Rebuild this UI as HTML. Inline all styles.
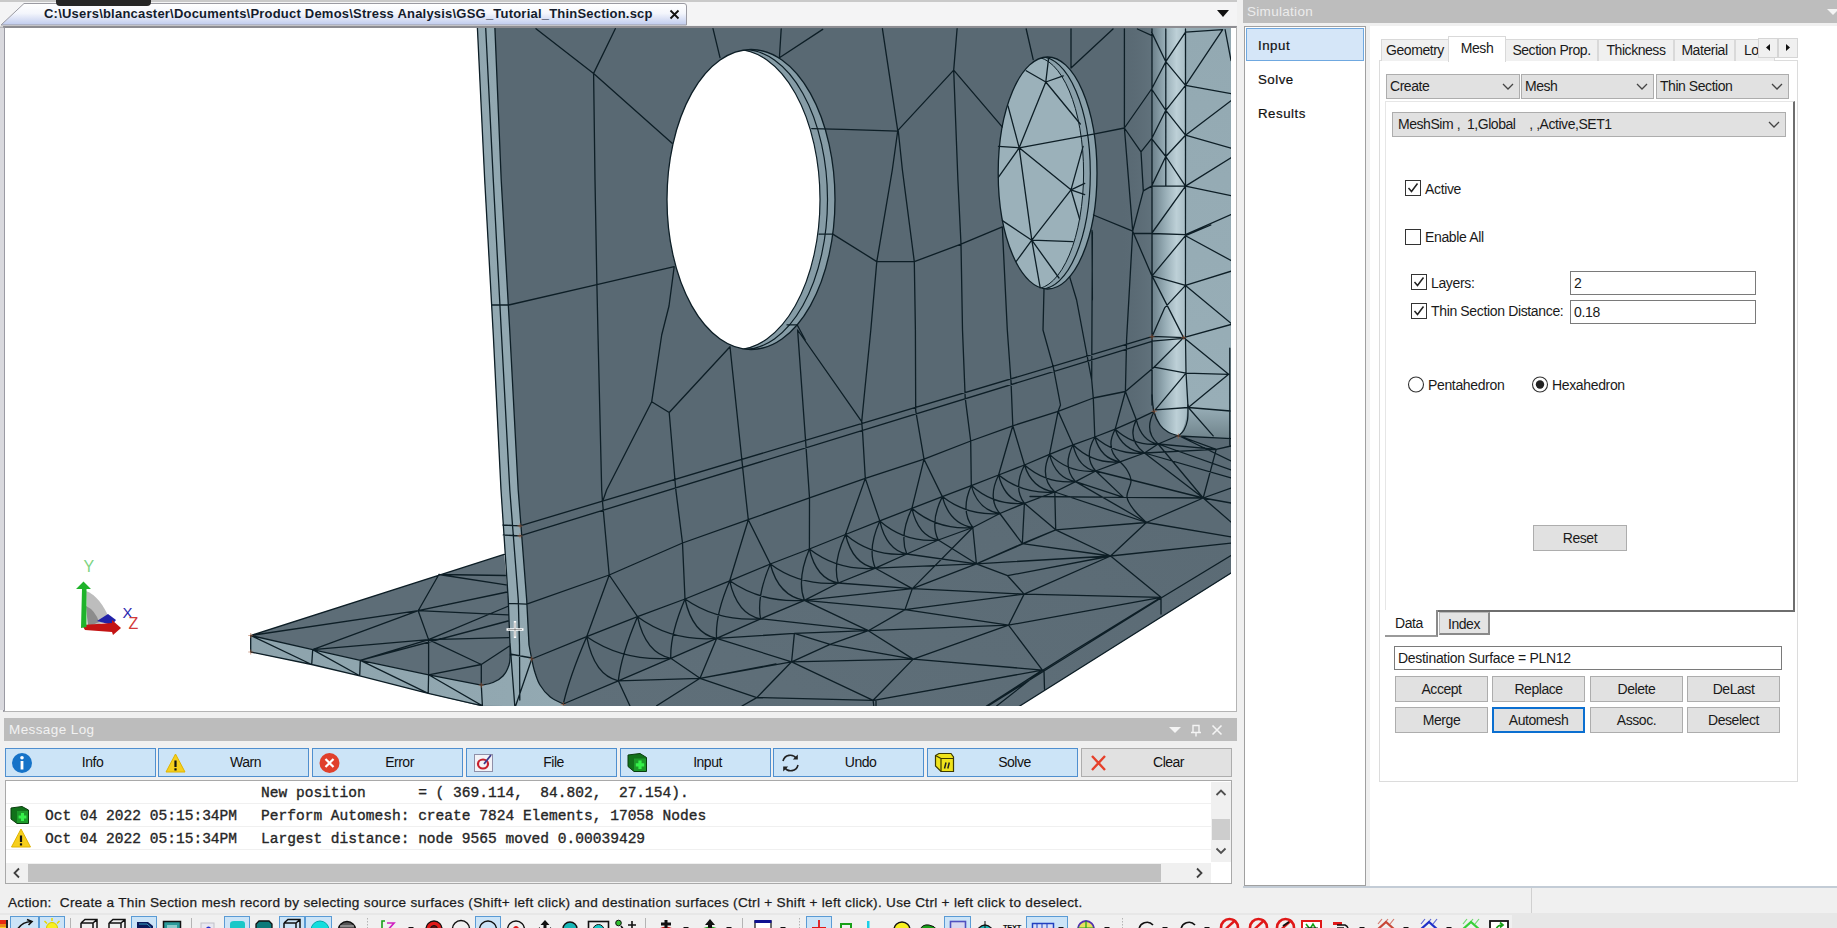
<!DOCTYPE html>
<html lang="en">
<head>
<meta charset="utf-8">
<title>Simulation - Thin Section Mesh</title>
<style>
*{box-sizing:border-box;margin:0;padding:0}
html,body{width:1837px;height:928px;overflow:hidden;background:#f0f0f0;font-family:"Liberation Sans",sans-serif;font-size:13.5px;color:#1a1a1a}
.abs{position:absolute}
#root{position:relative;width:1837px;height:928px;overflow:hidden;background:#f0f0f0}
/* ---------- document tab bar ---------- */
#tabbar{left:0;top:0;width:1237px;height:28px;background:#f4f4f5;border-top:2px solid #c9c9c9}
#tabbar .line{left:0;top:23px;width:1237px;height:3px;background:linear-gradient(#fdfdfd,#a8a8ac)}
#doctab{left:0;top:0;width:690px;height:26px}
#doctitle{left:44px;top:5.5px;font-size:13px;font-weight:bold;color:#141c2c;white-space:nowrap;letter-spacing:.21px;transform-origin:0 0}
#blob{left:56px;top:-4px;width:95px;height:10px;background:#262626;border-radius:4px}
/* ---------- viewport ---------- */
#vpframe{left:0;top:26px;width:1237px;height:686px;background:#fff;border-left:2px solid #9a9aa3;border-top:2px solid #8d8d92;border-right:1px solid #b4b4b4;border-bottom:1px solid #b4b4b4}
#vpleft{left:0;top:28px;width:4px;height:682px;background:#d9d9de}
#vp{left:5px;top:28px;width:1226px;height:678px;background:#fff;overflow:hidden}
/* ---------- message log ---------- */
#mlhead{left:4px;top:718px;width:1233px;height:23px;background:#bcbcbc;color:#f2f2f2;font-size:13.5px;line-height:23px;padding-left:5px;letter-spacing:.4px}
.mbtn{top:748px;height:29px;width:151px;background:#cce4f7;border:1px solid #4f8fcf;text-align:center;padding-left:24px;line-height:27px;font-size:14px;letter-spacing:-.5px;color:#111}
.mbtn svg{position:absolute;left:5px;top:3px}
#loglist{left:5px;top:780px;width:1227px;height:104px;background:#fff;border:1px solid #a9a9a9}
.lrow{left:0;width:1205px;height:23px;border-bottom:1px solid #f0f0f0;font-family:"Liberation Mono",monospace;font-size:14.55px;color:#262626;-webkit-text-stroke:.35px #262626;line-height:25px;white-space:pre}
#vscroll{left:1205px;top:1px;width:20px;height:80px;background:#f0f0f0}
#hscroll{left:0px;top:82px;width:1205px;height:20px;background:#f0f0f0}
/* ---------- status ---------- */
#status{left:0;top:888px;width:1837px;height:25px;background:#f0f0f0}
#statustxt{left:8px;top:7px;font-size:13.6px;letter-spacing:.3px;color:#1c1c1c;-webkit-text-stroke:.25px #1c1c1c;white-space:pre;transform-origin:0 0}
#tbstrip{left:0;top:913px;width:1837px;height:15px;background:#e7e7e7;overflow:hidden}
/* ---------- simulation panel ---------- */
#simhead{left:1243px;top:0;width:594px;height:23px;background:#bdbdbd;color:#ececec;font-size:13.5px;line-height:23px;padding-left:4px;letter-spacing:.3px}
#simlist{left:1244px;top:26px;width:122px;height:860px;background:#fff;border:1px solid #a0a0a0}
#simright{left:1370px;top:26px;width:467px;height:860px;background:#fff}
.sitem{left:1px;width:118px;height:33px;font-size:13.3px;line-height:35px;padding-left:12px;color:#111;letter-spacing:.5px;-webkit-text-stroke:.2px #111}
.tab{top:39px;height:22px;background:#f0f0f0;border:1px solid #d9d9d9;border-bottom:none;font-size:14px;line-height:21px;text-align:center;letter-spacing:-.45px;white-space:nowrap;overflow:hidden}
.combo{height:25px;margin-top:1px;background:#e1e1e1;border:1px solid #adadad;font-size:14px;line-height:23px;padding-left:3px;letter-spacing:-.45px;white-space:pre}
.combo svg{position:absolute;right:5px;top:8px}
.lbl{font-size:14px;letter-spacing:-.35px;white-space:nowrap;line-height:16px}
.cb{width:16px;height:16px;border:1px solid #333;background:#fff}
.inp{height:24px;border:1px solid #7a7a7a;background:#fff;font-size:14px;line-height:22px;padding-left:3px;letter-spacing:-.3px;white-space:nowrap}
.btn{height:26px;width:93px;background:#e1e1e1;border:1px solid #adadad;text-align:center;font-size:14px;line-height:24px;letter-spacing:-.45px}
</style>
</head>
<body>
<div id="root">

<!-- document tab bar -->
<div id="tabbar" class="abs"><div class="line abs"></div></div>
<svg id="doctab" class="abs" width="690" height="26" viewBox="0 0 690 26">
  <defs><linearGradient id="tg" x1="0" y1="0" x2="0" y2="1"><stop offset="0" stop-color="#ffffff"/><stop offset=".45" stop-color="#f4f6fc"/><stop offset="1" stop-color="#bfcbee"/></linearGradient></defs>
  <path d="M1 25 L24 3.5 L684 3.5 Q686.5 3.5 686.5 6 L686.5 25 Z" fill="url(#tg)" stroke="#9a9aa2" stroke-width="1"/>
  <path d="M670.5 10.5 l8 8 m0 -8 l-8 8" stroke="#111" stroke-width="1.8" fill="none"/>
</svg>
<div id="blob" class="abs"></div>
<div id="doctitle" class="abs">C:\Users\blancaster\Documents\Product Demos\Stress Analysis\GSG_Tutorial_ThinSection.scp</div>
<svg class="abs" style="left:1217px;top:10px" width="12" height="8"><path d="M0 0 L12 0 L6 7 Z" fill="#111"/></svg>

<!-- viewport -->
<div id="vpframe" class="abs" style="left:3px;width:1234px"></div><div id="vpleft" class="abs"></div>
<div id="vp" class="abs">
<svg width="1226" height="678" viewBox="5 28 1226 678" style="position:absolute;left:0;top:0">
<defs>
<linearGradient id="gcol" x1="1152" y1="0" x2="1187" y2="0" gradientUnits="userSpaceOnUse"><stop offset="0" stop-color="#6b7f89"/><stop offset=".35" stop-color="#94aab3"/><stop offset=".7" stop-color="#bdd0d7"/><stop offset="1" stop-color="#a6bbc3"/></linearGradient>
<linearGradient id="gface" x1="0" y1="28" x2="0" y2="440" gradientUnits="userSpaceOnUse"><stop offset="0" stop-color="#93a9b2"/><stop offset=".92" stop-color="#98aeb7"/><stop offset="1" stop-color="#6d8189"/></linearGradient>
<linearGradient id="gwebr" x1="1120" y1="0" x2="1152" y2="0" gradientUnits="userSpaceOnUse"><stop offset="0" stop-color="#596973" stop-opacity="0"/><stop offset="1" stop-color="#61727c"/></linearGradient>
<linearGradient id="gfl" x1="560" y1="700" x2="760" y2="300" gradientUnits="userSpaceOnUse"><stop offset="0" stop-color="#5f6f79"/><stop offset="1" stop-color="#5b6b75"/></linearGradient>
<linearGradient id="gend" x1="0" y1="0" x2="1" y2="0"><stop offset="0" stop-color="#8da3ac"/><stop offset="1" stop-color="#93a9b2"/></linearGradient>
</defs>
<polygon points="477.4,28.0 1231.5,28.0 1231.5,573.0 1019.0,706.5 482.4,706.5 428.2,693.4 359.7,675.8 311.7,664.5 250.7,652.0 250.7,652.0 250.7,635.5 504.1,554.4 508.3,600.0 501.0,490.0 493.3,335.0 484.7,180.0 477.4,28.0" fill="#596973"/>
<polygon points="563.3,704.0 618.3,680.8 670.8,658.3 716.6,638.4 760.6,618.8 804.4,600.3 838.3,583.0 875.4,568.2 906.8,554.0 938.3,540.0 972.8,527.5 999.8,513.5 1024.4,503.3 1054.8,492.0 1075.5,481.6 1095.7,471.0 1120.0,461.8 1144.5,453.0 1158.1,444.0 1178.4,435.5 1231.5,440.0 1231.5,573.0 1019.0,706.5 563.0,706.5" fill="url(#gfl)"/>
<polygon points="250.7,635.5 504.1,554.4 510.0,645.0 510.2,655.0 508.0,668.0 500.0,678.0 481.3,685.2 428.6,674.8 360.3,660.3 312.7,649.6 250.7,635.5" fill="#5d6d77"/>
<polygon points="477.4,28.0 484.7,180.0 493.3,335.0 501.0,490.0 508.3,600.0 510.0,645.0 510.2,655.0 509.0,665.0 503.0,676.0 493.0,682.5 481.3,685.2 428.6,674.8 360.3,660.3 312.7,649.6 250.7,635.5 250.7,652.0 311.7,664.5 359.7,675.8 428.2,693.4 482.4,705.8 563.3,706.5 563.3,704.0 550.0,696.7 540.0,685.0 534.5,671.0 531.7,659.0 529.0,645.0 526.7,600.0 518.2,490.0 510.0,335.0 501.2,180.0 494.9,28.0" fill="url(#gend)"/>
<ellipse cx="751" cy="199.5" rx="84" ry="150" fill="#869ca6"/>
<clipPath id="cN1"><ellipse cx="751" cy="199.5" rx="84" ry="150"/></clipPath>
<g clip-path="url(#cN1)"><ellipse cx="736" cy="199.5" rx="84" ry="150" fill="#fff" stroke="#0d1e26" stroke-width="1.2"/>
<ellipse cx="743.5" cy="199.5" rx="84" ry="150" fill="none" stroke="#0d1e26" stroke-width="1.2"/></g>
<ellipse cx="751" cy="199.5" rx="84" ry="150" fill="none" stroke="#0d1e26" stroke-width="1.3"/>
<ellipse cx="1047.6" cy="173" rx="49.4" ry="116" fill="#8aa0aa"/>
<clipPath id="cN2"><ellipse cx="1047.6" cy="173" rx="49.4" ry="116"/></clipPath>
<g clip-path="url(#cN2)"><ellipse cx="1034.8" cy="173" rx="48.8" ry="116" fill="#9bb1ba" stroke="#0d1e26" stroke-width="1"/>
<ellipse cx="1041.2" cy="173" rx="49.1" ry="116" fill="none" stroke="#0d1e26" stroke-width="1.2"/></g>
<ellipse cx="1047.6" cy="173" rx="49.4" ry="116" fill="none" stroke="#0d1e26" stroke-width="1.3"/>
<path d="M1152 28 L1231.5 28 L1231.5 439.500 L1178.4 436.500 Q1158 432 1153.5 405 Z" fill="url(#gface)"/>
<path d="M1152 28 L1185.5 28 L1187.500 400 Q1187 428 1178.4 436 Q1158 432 1153.5 405 Z" fill="url(#gcol)"/>
<rect x="1120" y="28" width="32" height="386" fill="url(#gwebr)"/>
<g fill="none" stroke="#0d1e26" stroke-width="1.3" stroke-linejoin="round" stroke-linecap="round">
<path d="M477.4 28.0 L484.7 180.0 L493.3 335.0 L501.0 490.0 L508.3 600.0 L510.0 645.0 L510.2 655.0 M485.7 28.0 L493.3 180.0 L501.5 335.0 L509.8 490.0 L518.3 600.0 L519.5 645.0 L519.8 700.0 M494.9 28.0 L501.2 180.0 L510.0 335.0 L518.2 490.0 L526.7 600.0 L529.0 645.0 L531.7 659.0 M491.7 305.0 L508.7 305.0 M502.8 525.0 L520.0 525.8 M503.3 535.0 L520.0 535.8 M508.5 603.3 L526.7 604.2 M510.0 654.0 L531.7 658.0 M510.0 643.0 L514.8 706.0 M531.7 659.0 L515.6 706.0 M250.7 635.5 L504.1 554.4 M250.7 635.5 L312.7 649.6 L360.3 660.3 L428.6 674.8 L481.3 685.2 M250.7 652.0 L311.7 664.5 L359.7 675.8 L428.2 693.4 L482.4 705.8 M250.7 635.5 L250.7 652.0 M312.7 649.6 L311.7 664.5 M360.3 660.3 L359.7 675.8 M428.6 674.8 L428.2 693.4 M481.3 685.2 L482.4 705.8 M250.7 635.5 L311.7 664.5 M312.7 649.6 L359.7 675.8 M360.3 660.3 L428.2 693.4 M428.6 674.8 L482.4 705.8 M1231.0 573.0 L1019.0 706.5 M1231.0 555.6 L1161.0 598.0 L1044.0 671.0 L988.0 706.0 M1161.0 598.0 L1161.0 614.0 M1044.0 671.0 L1044.5 689.0 M876.0 700.3 L876.0 706.0 M536.0 28.7 L593.6 73.4 L672.1 143.3 M615.3 28.7 L593.6 73.4 M713.0 28.7 L720.0 57.6 M593.6 73.4 L595.0 180.0 L596.9 284.7 L598.0 335.0 L601.7 490.0 L602.5 501.7 L609.2 575.0 M508.7 305.0 L596.9 284.7 L674.2 266.7 M674.2 266.7 L669.0 306.0 L661.7 335.0 L651.7 401.7 M651.7 401.7 L606.7 489.7 L602.5 501.7 M651.7 401.7 L669.2 412.5 M669.2 412.5 L730.0 346.7 M669.2 412.5 L675.8 489.7 L682.5 543.0 L685.0 599.0 M730.0 346.7 L745.0 489.7 L748.3 519.7 M520.0 525.8 L1152.0 336.7 M520.0 535.8 L1152.0 341.3 M526.7 604.2 L609.2 575.0 L682.5 543.0 L748.3 519.7 L809.5 497.8 L865.3 478.4 L924.0 459.2 L970.7 441.0 L1012.8 425.8 L1058.1 411.3 L1093.3 398.0 L1125.4 391.5 L1154.0 367.2 M531.7 659.0 L586.7 636.7 L637.5 616.7 L685.0 599.0 L729.7 580.8 L770.3 564.0 L809.4 549.0 L845.5 534.5 L879.8 520.9 L911.9 508.4 L942.3 496.6 L971.3 485.6 L998.6 475.0 L1024.5 465.0 L1049.5 454.4 L1073.0 444.8 L1094.8 437.0 L1115.2 429.2 L1136.3 419.8 L1154.2 411.3 M563.3 704.0 L618.3 680.8 L670.8 658.3 L716.6 638.4 L760.6 618.8 L804.4 600.3 L838.3 583.0 L875.4 568.2 L906.8 554.0 L938.3 540.0 L972.8 527.5 L999.8 513.5 L1024.4 503.3 L1054.8 492.0 L1075.5 481.6 L1095.7 471.0 L1120.0 461.8 L1144.5 453.0 L1158.1 444.0 L1178.4 435.5 M609.2 575.0 L586.7 636.7 M609.2 575.0 L637.5 616.7 M748.3 519.7 L729.7 580.8 M748.3 519.7 L770.3 564.0 M809.5 497.8 L809.4 549.0 M865.3 478.4 L845.5 534.5 M865.3 478.4 L879.8 520.9 M924.0 459.2 L911.9 508.4 M924.0 459.2 L942.3 496.6 M970.7 441.0 L971.3 485.6 M1012.8 425.8 L998.6 475.0 M1012.8 425.8 L1024.5 465.0 M1058.1 411.3 L1049.5 454.4 M1058.1 411.3 L1073.0 444.8 M1093.3 398.0 L1094.8 437.0 M1125.4 391.5 L1115.2 429.2 M1125.4 391.5 L1136.3 419.8 M797.6 330.0 L805.8 443.6 L809.5 497.8 M797.6 330.0 L861.7 421.6 M870.8 330.0 L865.3 385.0 L861.7 421.6 L862.6 432.6 L865.3 478.4 M915.4 330.0 L915.7 410.6 L924.0 459.2 M962.5 330.0 L965.2 397.8 L970.7 441.0 M1007.3 330.0 L1011.0 381.3 L1012.8 425.8 M1043.0 330.0 L1053.2 366.6 L1060.5 405.0 L1058.1 411.3 M1092.4 232.0 L1091.7 380.0 L1093.3 398.0 M1124.4 29.0 L1124.4 128.0 L1132.7 231.2 L1126.6 339.0 L1125.4 391.5 M781.2 29.0 L779.4 57.7 L822.7 29.4 M882.4 28.7 L897.7 130.3 M811.7 128.6 L843.4 129.4 L897.7 131.1 M897.7 130.6 L953.7 70.1 M957.1 28.7 L953.7 70.1 L957.9 180.1 M953.7 70.1 L1002.2 126.9 M897.7 131.0 L892.3 170.0 L876.8 261.6 L870.8 330.0 M898.3 131.0 L902.4 170.0 L914.3 261.6 L915.4 330.0 M957.9 180.0 L961.0 244.2 L962.5 330.0 M787.0 324.8 L797.1 324.8 L805.3 340.0 M819.0 234.1 L832.8 234.1 L876.8 261.6 L914.3 261.6 L961.0 244.2 L1002.3 226.8 M1002.3 226.8 L1007.3 330.0 M1044.0 289.0 L1043.0 330.0 M1069.6 276.6 L1076.6 300.0 L1091.7 380.0 M1092.0 230.4 L1092.4 300.0 M1026.2 29.0 L1033.2 59.6 M1071.0 29.0 L1071.0 68.0 M1071.0 68.0 L1113.0 29.0 M1094.8 133.8 L1124.4 128.0 M1093.4 215.0 L1132.7 231.2 M1124.4 128.0 L1151.6 89.0 M1137.4 29.0 L1152.0 35.7 M1124.4 128.0 L1141.0 151.8 L1143.3 190.9 L1132.7 231.2 M1141.0 151.8 L1151.6 138.7 M1143.3 190.9 L1151.6 186.1 M1132.7 231.2 L1152.0 276.0 M1045.8 82.0 L1048.6 58.2 M1045.8 82.0 L1026.2 70.8 M1045.8 82.0 L1063.2 75.8 M1045.8 82.0 L1080.3 124.0 M1019.2 147.8 L1008.0 105.8 M1019.2 147.8 L998.5 146.4 M1019.2 147.8 L998.5 177.2 M1019.2 147.8 L1094.8 133.8 M1071.0 189.8 L1083.1 146.4 M1071.0 189.8 L1084.7 183.4 M1071.0 189.8 L1084.7 194.6 M1071.0 189.8 L1079.7 219.2 M1031.8 240.2 L1002.4 220.6 M1031.8 240.2 L1016.4 261.2 M1031.8 240.2 L1040.2 287.8 M1031.8 240.2 L1073.0 241.6 M1031.8 240.2 L1059.0 278.0 M1045.8 82.0 L1019.2 147.8 M1019.2 147.8 L1071.0 189.8 M1019.2 147.8 L1031.8 240.2 M1071.0 189.8 L1031.8 240.2 M1152.0 29.0 L1152.0 405.0 M1165.8 29.0 L1165.8 186.0 M1185.5 29.0 L1185.5 337.0 L1186.0 372.0 L1188.0 407.0 M1151.6 32.1 L1165.8 61.7 L1185.5 85.4 M1185.5 32.1 L1165.8 61.7 L1151.6 89.0 M1151.6 89.0 L1165.8 110.3 L1185.5 135.2 M1185.5 85.4 L1165.8 110.3 L1151.6 138.7 M1151.6 138.7 L1165.8 156.5 L1185.5 186.1 M1185.5 135.2 L1165.8 156.5 L1151.6 186.1 M1151.6 186.1 L1185.5 186.1 M1185.5 186.1 L1151.6 233.5 M1132.7 233.5 L1151.6 233.5 L1185.5 234.7 M1185.5 85.4 L1231.0 93.7 M1185.5 85.4 L1222.7 29.7 M1185.5 32.1 L1222.7 29.7 M1225.1 29.7 L1231.0 60.5 M1185.5 135.2 L1231.0 100.8 M1185.5 135.2 L1231.0 148.2 M1185.5 186.1 L1231.0 157.7 M1185.5 186.1 L1231.0 195.6 M1185.5 234.7 L1231.0 214.6 M1185.5 235.7 L1152.1 275.9 M1152.1 275.9 L1185.5 285.4 M1185.5 285.4 L1164.6 307.9 L1152.1 336.4 M1152.1 275.9 L1183.6 337.6 M1152.1 336.4 L1183.6 337.6 M1152.1 341.1 L1183.6 338.3 M1183.6 337.6 L1154.0 367.2 M1154.0 367.2 L1186.0 373.1 M1186.0 373.1 L1155.2 409.8 M1155.2 409.8 L1188.3 407.5 M1185.5 235.7 L1231.0 260.5 M1185.5 235.7 L1210.9 225.0 M1185.5 285.4 L1231.0 271.2 M1185.5 285.4 L1231.0 323.3 M1183.6 337.6 L1231.0 324.5 M1183.6 337.6 L1228.6 374.3 M1186.0 373.1 L1228.6 374.3 M1228.6 374.3 L1188.3 407.5 M1188.3 407.5 L1230.3 411.0 M1188.3 407.5 L1213.2 435.9 M1229.8 348.2 L1229.8 444.9 M1178.4 436.0 L1231.0 438.7 M618.3 680.8 L700.0 678.3 M700.0 678.3 L670.8 658.3 M700.0 678.3 L716.6 638.4 M618.3 680.8 L630.0 706.0 M700.0 678.3 L656.6 705.8 M700.0 678.3 L756.8 697.6 M700.0 678.3 L791.6 661.8 M700.0 678.3 L776.0 664.0 M716.6 638.4 L794.4 633.4 L868.3 630.7 L1008.5 625.2 M716.6 638.4 L791.6 661.8 M791.6 661.8 L913.2 659.1 M791.6 661.8 L873.1 700.3 M791.6 661.8 L756.8 697.6 M791.6 661.8 L794.4 633.4 M791.6 661.8 L830.1 644.4 L868.3 630.7 M794.4 633.4 L830.1 644.4 L913.2 659.1 M868.3 630.7 L913.2 659.1 M868.3 630.7 L905.0 609.6 L912.3 588.6 M868.3 630.7 L804.4 600.3 M868.3 630.7 L760.6 618.8 M913.2 659.1 L1008.5 625.2 M913.2 659.1 L873.1 700.3 M756.8 697.6 L873.1 700.3 M804.4 600.3 L912.3 588.6 M804.4 600.3 L905.0 609.6 L1008.5 625.2 M838.3 583.0 L912.3 588.6 M875.4 568.2 L912.3 588.6 M875.4 568.2 L976.4 563.8 M906.8 554.0 L976.4 563.8 M912.3 588.6 L976.4 563.8 M756.8 697.6 L742.0 706.0 M873.1 700.3 L873.8 706.0 M913.2 659.1 L1042.4 670.1 M873.8 700.3 L1042.4 670.1 M1042.4 670.1 L986.5 706.0 M1042.4 670.1 L996.6 706.0 M1161.0 597.3 L1075.0 650.0 L1040.0 672.0 M1008.5 625.2 L1024.1 594.1 M1008.5 625.2 L1161.0 597.3 M1008.5 625.2 L1042.4 670.1 M1024.1 594.1 L912.3 588.6 M1024.1 594.1 L1007.6 575.7 L976.4 563.8 M1024.1 594.1 L905.0 609.6 M1024.1 594.1 L1161.0 597.3 M1024.1 594.1 L1110.6 556.0 M976.4 563.8 L1022.3 543.7 M976.4 563.8 L1110.6 556.0 M1007.6 575.7 L1110.6 556.0 M1022.3 543.7 L1110.6 556.0 M1022.3 543.7 L999.8 513.5 M1022.3 543.7 L1024.4 503.3 M1022.3 543.7 L1055.7 529.8 M1055.7 529.8 L1110.6 556.0 M1055.7 529.8 L1146.4 522.5 M1055.7 529.8 L1024.4 503.3 M1055.7 529.8 L1054.8 492.0 M1055.7 529.8 L976.4 563.8 M1110.6 556.0 L1161.0 597.3 M1110.6 556.0 L1146.4 522.5 L1203.2 498.0 L1231.0 488.0 M1110.6 556.0 L1231.0 543.2 M1146.4 522.5 L1231.0 536.8 M1146.4 522.5 L1054.8 492.0 M1146.4 522.5 L1075.5 481.6 M1203.2 498.0 L1231.0 522.0 M1203.2 498.0 L1123.5 497.4 L1030.0 496.5 M1203.2 498.0 L1095.7 471.0 M1203.2 498.0 L1231.0 503.0 M1203.2 498.0 L1216.2 449.4 M1203.2 498.0 L1144.5 453.0 M1203.2 498.0 L1158.1 444.0 M1123.5 497.4 L1095.7 471.0 M1123.5 497.4 L1075.5 481.6 M912.3 588.6 L972.8 527.5 M976.4 563.8 L938.3 540.0 M976.4 563.8 L972.8 527.5 M1216.2 449.4 L1144.5 453.0 M1216.2 449.4 L1178.4 435.5 M1216.2 449.4 L1231.0 446.0 M1216.2 449.4 L1158.1 444.0 M1231.0 470.0 L1158.1 444.0 M1231.0 478.0 L1144.5 453.0 M1231.0 461.0 L1178.4 435.5 M250.7 635.5 L418.2 610.7 L507.2 592.0 M438.9 574.5 L418.2 610.7 L428.6 639.6 L428.6 674.8 M312.7 649.6 L418.2 610.7 M312.7 649.6 L428.6 639.6 M360.3 660.3 L428.6 639.6 M360.3 660.3 L508.0 621.0 M428.6 639.6 L507.5 606.5 M428.6 639.6 L508.8 637.6 M428.6 639.6 L481.3 664.5 M418.2 610.7 L508.0 614.8 M438.9 574.5 L506.0 584.8 M428.6 674.8 L481.3 664.5 M481.3 664.5 L481.3 685.2 M481.3 664.5 L509.5 646.0 M438.9 574.5 L505.3 575.5"/>
<path d="M510.2 655.0 C510.0 656.7 510.2 661.5 509.0 665.0 C507.8 668.5 505.7 673.1 503.0 676.0 C500.3 678.9 496.6 681.0 493.0 682.5 C489.4 684.0 483.2 684.8 481.3 685.2 M531.7 659.0 C532.2 661.0 533.1 666.7 534.5 671.0 C535.9 675.3 537.4 680.7 540.0 685.0 C542.6 689.3 546.1 693.5 550.0 696.7 C553.9 699.9 561.1 702.8 563.3 704.0 M586.7 636.7 Q569.4 677.1 563.3 704.0 M586.7 636.7 Q594.3 675.5 618.3 680.8 M586.7 636.7 Q622.9 661.5 670.8 658.3 M637.5 616.7 Q621.2 655.2 618.3 680.8 M637.5 616.7 Q645.5 653.3 670.8 658.3 M637.5 616.7 Q671.5 641.7 716.6 638.4 M685.0 599.0 Q669.9 634.6 670.8 658.3 M685.0 599.0 Q692.6 633.7 716.6 638.4 M685.0 599.0 Q717.5 621.8 760.6 618.8 M729.7 580.8 Q714.9 615.4 716.6 638.4 M729.7 580.8 Q737.1 614.2 760.6 618.8 M729.7 580.8 Q761.8 603.2 804.4 600.3 M770.3 564.0 Q756.3 596.9 760.6 618.8 M770.3 564.0 Q778.5 595.9 804.4 600.3 M770.3 564.0 Q799.5 585.9 838.3 583.0 M809.4 549.0 Q796.5 579.8 804.4 600.3 M809.4 549.0 Q816.3 578.9 838.3 583.0 M809.4 549.0 Q837.8 571.1 875.4 568.2 M845.5 534.5 Q832.1 563.6 838.3 583.0 M845.5 534.5 Q852.7 564.2 875.4 568.2 M845.5 534.5 Q871.9 556.9 906.8 554.0 M879.8 520.9 Q867.0 549.3 875.4 568.2 M879.8 520.9 Q886.3 550.0 906.8 554.0 M879.8 520.9 Q905.0 542.9 938.3 540.0 M911.9 508.4 Q899.0 535.8 906.8 554.0 M911.9 508.4 Q918.2 536.2 938.3 540.0 M911.9 508.4 Q938.1 530.4 972.8 527.5 M942.3 496.6 Q929.6 522.6 938.3 540.0 M942.3 496.6 Q949.6 523.8 972.8 527.5 M942.3 496.6 Q967.0 516.0 999.8 513.5 M971.3 485.6 Q960.0 510.7 972.8 527.5 M971.3 485.6 Q978.1 510.2 999.8 513.5 M971.3 485.6 Q994.1 506.0 1024.4 503.3 M998.6 475.0 Q987.2 498.1 999.8 513.5 M998.6 475.0 Q1004.8 499.9 1024.4 503.3 M998.6 475.0 Q1022.8 494.6 1054.8 492.0 M1024.5 465.0 Q1012.8 488.0 1024.4 503.3 M1024.5 465.0 Q1031.8 488.8 1054.8 492.0 M1024.5 465.0 Q1046.4 484.1 1075.5 481.6 M1049.5 454.4 Q1039.1 477.0 1054.8 492.0 M1049.5 454.4 Q1055.7 478.3 1075.5 481.6 M1049.5 454.4 Q1069.4 473.5 1095.7 471.0 M1073.0 444.8 Q1061.9 466.9 1075.5 481.6 M1073.0 444.8 Q1078.4 467.9 1095.7 471.0 M1073.0 444.8 Q1093.2 464.4 1120.0 461.8 M1094.8 437.0 Q1083.3 457.4 1095.7 471.0 M1094.8 437.0 Q1100.8 458.8 1120.0 461.8 M1094.8 437.0 Q1116.2 455.4 1144.5 453.0 M1115.2 429.2 Q1104.7 448.8 1120.0 461.8 M1115.2 429.2 Q1122.2 450.1 1144.5 453.0 M1115.2 429.2 Q1133.6 446.2 1158.1 444.0 M1136.3 419.8 Q1126.6 439.7 1144.5 453.0 M1136.3 419.8 Q1141.5 441.1 1158.1 444.0 M1154.2 411.3 Q1143.4 430.9 1158.1 444.0 M1152.0 395.0 C1152.3 397.8 1152.7 407.0 1154.0 412.0 C1155.3 417.0 1157.7 421.7 1160.0 425.0 C1162.3 428.3 1164.9 430.2 1168.0 432.0 C1171.1 433.8 1176.7 435.3 1178.4 436.0 M1188.0 405.0 C1187.9 407.5 1188.2 415.8 1187.5 420.0 C1186.8 424.2 1185.5 427.3 1184.0 430.0 C1182.5 432.7 1179.3 435.0 1178.4 436.0 M1120.0 461.8 C1121.2 463.2 1125.2 466.8 1127.0 470.0 C1128.8 473.2 1131.0 476.5 1131.0 481.0 C1131.0 485.5 1126.5 492.2 1127.0 497.0 C1127.5 501.8 1130.8 505.8 1134.0 510.0 C1137.2 514.2 1144.3 520.4 1146.4 522.5"/>
</g>
<path d="M517.5 525.8 h5 M520.0 523.3 v5" stroke="#b0603a" stroke-width="1.2" opacity=".5"/>
<path d="M517.5 535.8 h5 M520.0 533.3 v5" stroke="#b0603a" stroke-width="1.2" opacity=".5"/>
<path d="M529.2 659.0 h5 M531.7 656.5 v5" stroke="#b0603a" stroke-width="1.2" opacity=".5"/>
<path d="M560.8 704.5 h5 M563.3 702.0 v5" stroke="#b0603a" stroke-width="1.2" opacity=".5"/>
<path d="M478.8 685.2 h5 M481.3 682.7 v5" stroke="#b0603a" stroke-width="1.2" opacity=".5"/>
<path d="M1149.5 336.7 h5 M1152.0 334.2 v5" stroke="#b0603a" stroke-width="1.2" opacity=".5"/>
<path d="M1181.1 337.6 h5 M1183.6 335.1 v5" stroke="#b0603a" stroke-width="1.2" opacity=".5"/>
<path d="M1151.7 411.3 h5 M1154.2 408.8 v5" stroke="#b0603a" stroke-width="1.2" opacity=".5"/>
<path d="M1175.9 436.0 h5 M1178.4 433.5 v5" stroke="#b0603a" stroke-width="1.2" opacity=".5"/>
<path d="M248.2 635.5 h5 M250.7 633.0 v5" stroke="#b0603a" stroke-width="1.2" opacity=".5"/>
<path d="M248.2 652.0 h5 M250.7 649.5 v5" stroke="#b0603a" stroke-width="1.2" opacity=".5"/>
<path d="M506.500 629.500 h17 M515 621 v17" stroke="#fff" stroke-width="2.400"/><path d="M508 629.500 h14 M515 622.500 v14" stroke="#333" stroke-width=".45"/>
<g>
<path d="M86 591 Q100 596 110 620 L88 628 Z" fill="#bdbdbd"/>
<path d="M86 606 Q95 610 99 622 L88 627 Z" fill="#8c8c8c"/>
<path d="M97 621 L108 614 L116 620 L112 625 Z" fill="#2222a8"/>
<path d="M82 625 L112 623 L112 620 L121 628 L113 635 L112 632 L85 630 Z" fill="#c41414"/>
<path d="M81 628 L82 589 L76 589 L83.5 581.500 L91 589 L86.500 589 L86.500 627 Z" fill="#1fb32a"/>
<text x="83.500" y="572" font-family="Liberation Sans, sans-serif" font-size="16" fill="#7ed482">Y</text>
<text x="122.500" y="618" font-family="Liberation Sans, sans-serif" font-size="15" fill="#2a2ab0">X</text>
<text x="128.500" y="629" font-family="Liberation Sans, sans-serif" font-size="16" fill="#d23a3a">Z</text>
</g>
</svg>

</div>

<!-- message log -->
<div id="mlhead" class="abs">Message Log</div>
<svg class="abs" style="left:1166px;top:722px" width="62" height="16" viewBox="0 0 62 16">
  <path d="M3 5 L15 5 L9 11 Z" fill="#f4f4f4"/>
  <path d="M27 3.5 h6 v7 h-6 z M25 10.5 h10 M30 10.5 v4" stroke="#f4f4f4" stroke-width="1.4" fill="none"/>
  <path d="M46.5 3.5 l9 9 m0 -9 l-9 9" stroke="#f4f4f4" stroke-width="1.6" fill="none"/>
</svg>

<div class="mbtn abs" style="left:5px">Info
 <svg width="24" height="22" viewBox="0 0 24 22"><circle cx="11" cy="11" r="10" fill="#1673c8"/><rect x="9.6" y="9" width="2.8" height="8.5" fill="#fff"/><circle cx="11" cy="5.8" r="1.8" fill="#fff"/></svg></div>
<div class="mbtn abs" style="left:158px">Warn
 <svg width="24" height="22" viewBox="0 0 24 22"><path d="M11.5 2 L21 20 L2 20 Z" fill="#f6cf1d" stroke="#e0b400" stroke-width="1"/><rect x="10.4" y="8.5" width="2.2" height="6.5" fill="#111"/><rect x="10.4" y="16.3" width="2.2" height="2.2" fill="#111"/></svg></div>
<div class="mbtn abs" style="left:312px">Error
 <svg width="24" height="22" viewBox="0 0 24 22"><circle cx="11.5" cy="11" r="10" fill="#e0402c"/><path d="M7.5 7 l8 8 m0 -8 l-8 8" stroke="#fff" stroke-width="2.2" fill="none"/></svg></div>
<div class="mbtn abs" style="left:466px">File
 <svg width="24" height="22" viewBox="0 0 24 22"><rect x="2.5" y="2.5" width="18" height="17" fill="#f3f3f7" stroke="#8f8fa8"/><ellipse cx="11" cy="12" rx="5" ry="4.5" fill="none" stroke="#c8202c" stroke-width="2.2"/><path d="M12 12 L19 3" stroke="#3b3b8c" stroke-width="1.8"/></svg></div>
<div class="mbtn abs" style="left:620px">Input
 <svg width="24" height="22" viewBox="0 0 24 22"><path d="M2 3 L14 1.5 L20.5 5.5 L20.5 19.5 L8 19.5 L2 14.5 Z" fill="#11721a" stroke="#0a3d0e" stroke-width="1"/><rect x="8" y="6.5" width="12" height="12.5" fill="#1d9a2a"/><path d="M14 8.5 v8.5 M9.8 12.8 h8.4" stroke="#35f04a" stroke-width="3.2"/></svg></div>
<div class="mbtn abs" style="left:773px">Undo
 <svg width="24" height="22" viewBox="0 0 24 22"><path d="M4 9 A7.5 7.5 0 0 1 17.5 6.5" stroke="#222" stroke-width="1.6" fill="none"/><path d="M19 13 A7.5 7.5 0 0 1 5.5 15.5" stroke="#222" stroke-width="1.6" fill="none"/><path d="M18.8 2.5 v5 h-5 z" fill="#222"/><path d="M4.2 19.5 v-5 h5 z" fill="#222"/></svg></div>
<div class="mbtn abs" style="left:927px">Solve
 <svg width="24" height="22" viewBox="0 0 24 22"><path d="M2.5 3.5 L6 1.5 L18 1.5 L20.5 5 L20.5 19.5 L8 19.5 L2.5 14 Z" fill="#efe31c" stroke="#3d3a00" stroke-width="1.2"/><path d="M8 6.5 h12.5 M8 6.5 V19.5 M8 6.5 L2.5 3.5" stroke="#3d3a00" stroke-width="1.2" fill="none"/><path d="M11.5 16.5 l1.5 -6 M14.8 16.5 l1.5 -6" stroke="#222" stroke-width="1.5"/></svg></div>
<div class="mbtn abs" style="left:1081px;background:#e1e1e1;border-color:#adadad">Clear
 <svg width="24" height="22" viewBox="0 0 24 22"><path d="M5 4 L18 18 M18 4 L5 18" stroke="#e6402a" stroke-width="2.4" fill="none"/></svg></div>

<div id="loglist" class="abs">
  <div class="lrow abs" style="top:0px"><span class="abs" style="left:255px">New position      = ( 369.114,  84.802,  27.154).</span></div>
  <div class="lrow abs" style="top:23px"><span class="abs" style="left:39px">Oct 04 2022 05:15:34PM</span><span class="abs" style="left:255px">Perform Automesh: create 7824 Elements, 17058 Nodes</span>
    <svg class="abs" style="left:3px;top:0" width="24" height="22" viewBox="0 0 24 22"><path d="M2 4 L13 2.5 L19.5 6 L19.5 19.5 L8 19.5 L2 15 Z" fill="#11721a" stroke="#0a3d0e" stroke-width="1"/><rect x="8" y="7" width="11" height="12" fill="#1d9a2a"/><path d="M13.5 9 v8 M9.6 13 h7.8" stroke="#35f04a" stroke-width="3"/></svg></div>
  <div class="lrow abs" style="top:46px"><span class="abs" style="left:39px">Oct 04 2022 05:15:34PM</span><span class="abs" style="left:255px">Largest distance: node 9565 moved 0.00039429</span>
    <svg class="abs" style="left:3px;top:0" width="24" height="22" viewBox="0 0 24 22"><path d="M12 2 L21.5 20 L2.5 20 Z" fill="#f6cf1d" stroke="#e0b400" stroke-width="1"/><rect x="10.9" y="8.5" width="2.2" height="6.5" fill="#111"/><rect x="10.9" y="16.3" width="2.2" height="2.2" fill="#111"/></svg></div>
  <div id="vscroll" class="abs">
    <svg class="abs" style="left:0;top:0" width="20" height="80" viewBox="0 0 20 80"><rect x="1" y="37" width="18" height="21" fill="#cdcdcd"/><path d="M5.5 13 L10 8.5 L14.5 13" stroke="#505050" stroke-width="1.8" fill="none"/><path d="M5.5 66.5 L10 71 L14.5 66.5" stroke="#505050" stroke-width="1.8" fill="none"/></svg>
  </div>
  <div id="hscroll" class="abs">
    <svg class="abs" style="left:0;top:0" width="1205" height="20" viewBox="0 0 1205 20"><rect x="22" y="1" width="1133" height="18" fill="#c1c1c1"/><path d="M13 5.5 L8.5 10 L13 14.5" stroke="#404040" stroke-width="1.8" fill="none"/><path d="M1191 5.5 L1195.500 10 L1191 14.5" stroke="#404040" stroke-width="1.8" fill="none"/></svg>
  </div>
</div>

<!-- status bar -->
<div id="status" class="abs">
  <div id="statustxt" class="abs">Action:  Create a Thin Section mesh record by selecting source surfaces (Shift+ left click) and destination surfaces (Ctrl + Shift + left click). Use Ctrl + left click to deselect.</div>
  <div class="abs" style="left:1531px;top:0;width:1px;height:25px;background:#d0d0d0"></div>
</div>
<div class="abs" style="left:1243px;top:886px;width:594px;height:2px;background:#c3ccd6"></div>
<div id="tbstrip" class="abs">
<svg width="1837" height="15" viewBox="0 0 1837 15" style="position:absolute;left:0;top:1.5px">
<rect x="0" y="0" width="1512" height="15" fill="#f0f0f0"/>
<rect x="0" y="5" width="6" height="4" fill="#e82a10"/><rect x="0" y="9" width="6" height="3" fill="#f08a18"/><rect x="0" y="12" width="6" height="3" fill="#f5d020"/><rect x="6" y="5" width="2" height="10" fill="#222"/>
<rect x="10.5" y="1.500" width="28" height="16" fill="#cce4f7" stroke="#5a9bd5" stroke-width="1"/>
<path d="M17 15 Q22 7 31 6.500 M27 4.500 l5 2 l-3.500 3.500" fill="none" stroke="#111" stroke-width="1.600"/>
<rect x="39.5" y="1.500" width="25" height="16" fill="#cce4f7" stroke="#5a9bd5" stroke-width="1"/>
<circle cx="52" cy="13" r="5.5" fill="#f8f020" stroke="#d8c800" stroke-width="1"/>
<path d="M52 3 v3 M44.500 6 l2.500 2.500 M59.500 6 l-2.500 2.500" stroke="#e8d800" stroke-width="1.500"/>
<path d="M70.5 3 v12" stroke="#b4b4b4" stroke-width="1"/>
<path d="M81 8 l4 -3.500 h12 v11 M81 8 h12 l4 -3.500 M81 8 v8 M93 8 v8" fill="none" stroke="#111" stroke-width="1.5"/>
<path d="M109 8 l4 -3.500 h12 v11 M109 8 h12 l4 -3.500 M109 8 v8 M121 8 v8" fill="none" stroke="#111" stroke-width="1.5"/>
<rect x="131.5" y="1.500" width="25" height="16" fill="#cce4f7" stroke="#5a9bd5" stroke-width="1"/>
<path d="M137 15 v-8 h11 l5 4 v4 z" fill="#0a1a5a"/><path d="M139 9 h8 l4 3.500" stroke="#39b" fill="none"/>
<rect x="163.500" y="6.500" width="17" height="10" fill="#2a9a9a" stroke="#111" stroke-width="1.500"/><rect x="167" y="10" width="10" height="6" fill="#8cc"/>
<path d="M191.5 3 v12" stroke="#b4b4b4" stroke-width="1"/>
<rect x="201" y="8" width="13" height="8" fill="#e8e8f0" stroke="#c0c0c8"/><circle cx="208.500" cy="14" r="2.500" fill="#2030d0"/>
<rect x="224.5" y="1.500" width="25" height="16" fill="#cce4f7" stroke="#5a9bd5" stroke-width="1"/>
<path d="M230 15 v-6 q0 -3 4 -3 h8 q3 0 3 3 v6 z" fill="#19c8c8"/>
<path d="M256 15 v-6 l3 -3 h10 l3 3 v6 z" fill="#0d7a7a" stroke="#111" stroke-width="1.300"/>
<rect x="279.5" y="1.500" width="25" height="16" fill="#cce4f7" stroke="#5a9bd5" stroke-width="1"/>
<path d="M284 8 l4 -3.500 h12 v11 M284 8 h12 l4 -3.500 M284 8 v8 M296 8 v8" fill="none" stroke="#111" stroke-width="1.5"/>
<rect x="305.5" y="1.500" width="26" height="16" fill="#cce4f7" stroke="#5a9bd5" stroke-width="1"/>
<circle cx="320" cy="15" r="9" fill="#12dede" stroke="#0aa" stroke-width="1"/>
<circle cx="347" cy="15" r="8.5" fill="#555" stroke="#111" stroke-width="1.5"/>
<path d="M340 11 h14 M339 14 h16" stroke="#ddd" stroke-width=".8"/>
<path d="M367.5 3 v12" stroke="#b4b4b4" stroke-width="1" stroke-dasharray="1.5 1.500"/>
<path d="M382 15 v-9 h3" stroke="#18a018" stroke-width="1.600" fill="none"/><path d="M387 8 h7 l-7 8 h7" stroke="#d020c0" stroke-width="1.700" fill="none"/>
<path d="M408 12 h6 l-3 3 z" fill="#111"/>
<circle cx="434" cy="14" r="8" fill="#e01818" stroke="#111" stroke-width="1.3"/>
<circle cx="434" cy="14" r="3.5" fill="#601010" stroke="#111" stroke-width="1"/>
<circle cx="461" cy="14" r="8.5" fill="none" stroke="#111" stroke-width="1.4"/>
<rect x="475.5" y="1.500" width="25" height="16" fill="#cce4f7" stroke="#5a9bd5" stroke-width="1"/>
<circle cx="488" cy="14.5" r="8.5" fill="none" stroke="#111" stroke-width="1.4"/>
<circle cx="516" cy="14.5" r="8.5" fill="none" stroke="#111" stroke-width="1.4"/>
<circle cx="516" cy="14" r="2.5" fill="#e01818" stroke="#e01818" stroke-width="1"/>
<path d="M545 5 l4.500 5 h-3 v5 h-3 v-5 h-3 z M536 15 l4 -3 v3 z M554 15 l-4 -3 v3 z" fill="#111"/>
<circle cx="570" cy="14" r="7" fill="#18b8b8" stroke="#111" stroke-width="1.4"/>
<rect x="588.500" y="6.500" width="20" height="10" fill="none" stroke="#111" stroke-width="1.600"/>
<circle cx="598.5" cy="15" r="5.5" fill="#18c8c8" stroke="#111" stroke-width="1"/>
<circle cx="618.500" cy="8" r="2.800" fill="#30c030" stroke="#111"/><path d="M621 11 l3 4 M632 6 v8 M628 10 h8" stroke="#111" stroke-width="1.600"/>
<path d="M645.5 3 v12" stroke="#b4b4b4" stroke-width="1"/>
<path d="M657 15 q9 -7 18 0 z" fill="#d81818"/><path d="M666 5 v8 M661 9 h10" stroke="#111" stroke-width="3"/>
<path d="M683 12 h6 l-3 3 z" fill="#111"/>
<path d="M700 15 q10 -7 20 0 z" fill="#18a818"/><path d="M710 4 l5 6 h-3 v4 h-4 v-4 h-3 z" fill="#111"/>
<path d="M726 12 h6 l-3 3 z" fill="#111"/>
<path d="M742.5 3 v12" stroke="#b4b4b4" stroke-width="1"/>
<rect x="755" y="6" width="16" height="10" fill="#fff" stroke="#111" stroke-width="1.200"/><rect x="754.500" y="5" width="17" height="3" fill="#101090"/>
<path d="M780 12 h6 l-3 3 z" fill="#111"/>
<path d="M799.5 3 v12" stroke="#b4b4b4" stroke-width="1" stroke-dasharray="1.5 1.500"/>
<rect x="806.5" y="1.500" width="25" height="16" fill="#cce4f7" stroke="#5a9bd5" stroke-width="1"/>
<path d="M819 5 v10 M812 13 h14" stroke="#e01818" stroke-width="1.800"/>
<rect x="841" y="9" width="10" height="8" fill="none" stroke="#18a018" stroke-width="2"/>
<rect x="867" y="6" width="2.500" height="10" fill="#18d0e8"/>
<circle cx="902" cy="15" r="8" fill="#f8f020" stroke="#111" stroke-width="1.4"/>
<path d="M920 15 q2 -6 9 -5 q6 1 8 5 z" fill="#18a018" stroke="#111"/>
<rect x="944.5" y="1.500" width="26" height="16" fill="#cce4f7" stroke="#5a9bd5" stroke-width="1"/>
<rect x="950.500" y="6.500" width="15" height="10" fill="#d8d8f0" stroke="#5050c0" stroke-width="1.600"/>
<path d="M977 15 q8 -10 16 0 z" fill="#18b8b8" stroke="#111" stroke-width="1.300"/><path d="M985 6 v9" stroke="#111"/>
<text x="1003" y="14.500" font-family="Liberation Sans, sans-serif" font-size="7.500" font-weight="bold" fill="#111" letter-spacing="-.3">TEXT</text>
<rect x="1026.5" y="1.500" width="41" height="16" fill="#cce4f7" stroke="#5a9bd5" stroke-width="1"/>
<rect x="1032.500" y="8.500" width="21" height="8" fill="#d8e0f8" stroke="#2040c0" stroke-width="1.500"/><path d="M1037 9 v4 M1042 9 v4 M1047 9 v4" stroke="#2040c0"/>
<path d="M1058 12 h6 l-3 3 z" fill="#111"/>
<circle cx="1086" cy="14" r="8" fill="#e8e060" stroke="#5030b0" stroke-width="1.8"/>
<path d="M1078 13 h16 M1086 6 v10" stroke="#18a018" stroke-width="1.200"/>
<path d="M1104 12 h6 l-3 3 z" fill="#111"/>
<path d="M1122.5 3 v12" stroke="#b4b4b4" stroke-width="1" stroke-dasharray="1.5 1.500"/>
<path d="M1139 15 a8 8 0 0 1 14 -5" fill="none" stroke="#111" stroke-width="1.600"/>
<path d="M1162 12 h6 l-3 3 z" fill="#111"/>
<path d="M1181 15 a8 8 0 0 1 14 -5" fill="none" stroke="#111" stroke-width="1.600"/>
<path d="M1204 12 h6 l-3 3 z" fill="#111"/>
<circle cx="1229.5" cy="12.5" r="8.5" fill="none" stroke="#e01818" stroke-width="2.6"/>
<path d="M1223.5 16 L1235.5 5" stroke="#e01818" stroke-width="2.400"/>
<circle cx="1258.5" cy="12.5" r="8.5" fill="none" stroke="#e01818" stroke-width="2.6"/>
<path d="M1252.5 16 L1264.5 5" stroke="#e01818" stroke-width="2.400"/>
<circle cx="1285.5" cy="12.5" r="8.5" fill="none" stroke="#e01818" stroke-width="2.6"/>
<path d="M1279.5 16 L1291.5 5" stroke="#e01818" stroke-width="2.400"/>
<path d="M1283 11 l6 -4" stroke="#111" stroke-width="2"/>
<rect x="1302" y="6" width="19" height="10" fill="#fff" stroke="#e01818" stroke-width="2"/><path d="M1306 9 l4 5 l3 -5 l3 5" stroke="#18a018" stroke-width="1.600" fill="none"/><path d="M1305 13 h13" stroke="#111"/>
<path d="M1333 7 h9 v3 h-9 z" fill="#e01818"/><path d="M1337 10 h8 q4 2 3 6 M1337 13 h7" stroke="#111" stroke-width="1.400" fill="none"/>
<path d="M1359 12 h6 l-3 3 z" fill="#111"/>
<path d="M1377 15 l9 -8 l9 8" fill="none" stroke="#c84838" stroke-width="2.200"/><path d="M1378 9 l4 -5 M1384 9 l4 -5 M1390 9 l4 -5" stroke="#c84838" stroke-width="1.200" opacity=".7"/>
<path d="M1403 12 h6 l-3 3 z" fill="#111"/>
<path d="M1420 15 l9 -8 l9 8" fill="none" stroke="#2030c8" stroke-width="2.200"/><path d="M1421 9 l4 -5 M1427 9 l4 -5 M1433 9 l4 -5" stroke="#2030c8" stroke-width="1.200" opacity=".7"/>
<path d="M1446 12 h6 l-3 3 z" fill="#111"/>
<path d="M1462 15 l9 -8 l9 8" fill="none" stroke="#38d038" stroke-width="2.200"/><path d="M1463 9 l4 -5 M1469 9 l4 -5 M1475 9 l4 -5" stroke="#38d038" stroke-width="1.200" opacity=".7"/>
<rect x="1490" y="6" width="18" height="11" fill="#fff" stroke="#111" stroke-width="1.800"/><path d="M1496 15 q1 -5 6 -5 M1500 7.500 l3 2.500 l-3 2.500" stroke="#18a018" stroke-width="1.700" fill="none"/>
</svg>
</div>

<!-- simulation panel -->
<div id="simhead" class="abs">Simulation</div>
<svg class="abs" style="left:1826px;top:8px" width="11" height="8"><path d="M1 1 L13 1 L7 7 Z" fill="#f4f4f4"/></svg>
<div id="simlist" class="abs">
  <div class="sitem abs" style="top:1px;background:#d5e6f8;border:1px solid #6fa8e0;line-height:33px;padding-left:11px">Input</div>
  <div class="sitem abs" style="top:35px">Solve</div>
  <div class="sitem abs" style="top:69px">Results</div>
</div>
<div id="simright" class="abs"></div>
<!-- property tabs -->
<div class="abs" style="left:1379px;top:60px;width:419px;height:722px;border:1px solid #dcdcdc;background:#fff"></div>
<div class="tab abs" style="left:1381px;width:68px">Geometry</div>
<div class="tab abs" style="left:1505px;width:93px">Section Prop.</div>
<div class="tab abs" style="left:1598px;width:76px">Thickness</div>
<div class="tab abs" style="left:1674px;width:61px">Material</div>
<div class="tab abs" style="left:1735px;width:40px;text-align:left;padding-left:8px">Lo</div>
<div class="tab abs" style="left:1448px;top:36px;width:58px;height:26px;background:#fff;line-height:22px">Mesh</div>
<div class="abs" style="left:1758px;top:38px;width:20px;height:20px;background:#f0f0f0;border:1px solid #d5d5d5"></div>
<div class="abs" style="left:1778px;top:38px;width:20px;height:20px;background:#f0f0f0;border:1px solid #d5d5d5"></div>
<svg class="abs" style="left:1758px;top:38px" width="40" height="20"><path d="M12 6 v7 l-4 -3.500 z M28 6 v7 l4 -3.500 z" fill="#111"/></svg>

<!-- combos -->
<div class="combo abs" style="left:1386px;top:73px;width:134px">Create<svg width="12" height="8"><path d="M1 1 L6 6 L11 1" stroke="#444" stroke-width="1.3" fill="none"/></svg></div>
<div class="combo abs" style="left:1521px;top:73px;width:133px">Mesh<svg width="12" height="8"><path d="M1 1 L6 6 L11 1" stroke="#444" stroke-width="1.3" fill="none"/></svg></div>
<div class="combo abs" style="left:1656px;top:73px;width:133px">Thin Section<svg width="12" height="8"><path d="M1 1 L6 6 L11 1" stroke="#444" stroke-width="1.3" fill="none"/></svg></div>

<!-- inner frame -->
<div class="abs" style="left:1385px;top:101px;width:410px;height:511px;background:#fff;border-left:1px solid #e6e6e6;border-top:1px solid #e6e6e6;border-right:2px solid #6e6e6e;border-bottom:2px solid #6e6e6e"></div>
<div class="combo abs" style="left:1392px;top:111px;width:394px;padding-left:5px">MeshSim ,  1,Global    , ,Active,SET1<svg width="12" height="8"><path d="M1 1 L6 6 L11 1" stroke="#444" stroke-width="1.3" fill="none"/></svg></div>

<div class="cb abs" style="left:1405px;top:180px"><svg width="14" height="14"><path d="M2.500 7 L5.500 10.500 L11.500 2.500" stroke="#222" stroke-width="1.5" fill="none"/></svg></div>
<div class="lbl abs" style="left:1425px;top:181px">Active</div>
<div class="cb abs" style="left:1405px;top:229px"></div>
<div class="lbl abs" style="left:1425px;top:229px">Enable All</div>

<div class="cb abs" style="left:1411px;top:274px"><svg width="14" height="14"><path d="M2.500 7 L5.500 10.500 L11.500 2.500" stroke="#222" stroke-width="1.5" fill="none"/></svg></div>
<div class="lbl abs" style="left:1431px;top:275px">Layers:</div>
<div class="inp abs" style="left:1570px;top:271px;width:186px">2</div>
<div class="cb abs" style="left:1411px;top:303px"><svg width="14" height="14"><path d="M2.500 7 L5.500 10.500 L11.500 2.500" stroke="#222" stroke-width="1.5" fill="none"/></svg></div>
<div class="lbl abs" style="left:1431px;top:303px">Thin Section Distance:</div>
<div class="inp abs" style="left:1570px;top:300px;width:186px">0.18</div>

<svg class="abs" style="left:1406px;top:375px" width="150" height="20"><circle cx="10" cy="9.500" r="7.500" fill="#fff" stroke="#333" stroke-width="1.1"/><circle cx="134" cy="9.500" r="7.500" fill="#fff" stroke="#333" stroke-width="1.1"/><circle cx="134" cy="9.500" r="4.200" fill="#222"/></svg>
<div class="lbl abs" style="left:1428px;top:377px">Pentahedron</div>
<div class="lbl abs" style="left:1552px;top:377px">Hexahedron</div>

<div class="btn abs" style="left:1533px;top:525px;width:94px">Reset</div>

<!-- data / index tabs -->
<div class="abs" style="left:1385px;top:610px;width:53px;height:27px;background:#fff;border-bottom:2px solid #9a9a9a;border-right:2px solid #8a8a8a;font-size:14px;letter-spacing:-.45px;line-height:27px;text-align:center;padding-right:3px">Data</div>
<div class="abs" style="left:1439px;top:612px;width:51px;height:23px;background:#e4e4e4;border:1px solid #b8b8b8;border-right:2px solid #8a8a8a;border-bottom:2px solid #8a8a8a;font-size:14px;letter-spacing:-.45px;line-height:23px;text-align:center">Index</div>

<div class="inp abs" style="left:1394px;top:646px;width:388px">Destination Surface = PLN12</div>

<div class="btn abs" style="left:1395px;top:676px">Accept</div>
<div class="btn abs" style="left:1492px;top:676px">Replace</div>
<div class="btn abs" style="left:1590px;top:676px">Delete</div>
<div class="btn abs" style="left:1687px;top:676px">DeLast</div>
<div class="btn abs" style="left:1395px;top:707px">Merge</div>
<div class="btn abs" style="left:1492px;top:707px;border:2px solid #0b6fd0;line-height:22px">Automesh</div>
<div class="btn abs" style="left:1590px;top:707px">Assoc.</div>
<div class="btn abs" style="left:1687px;top:707px">Deselect</div>


</div>
</body>
</html>
